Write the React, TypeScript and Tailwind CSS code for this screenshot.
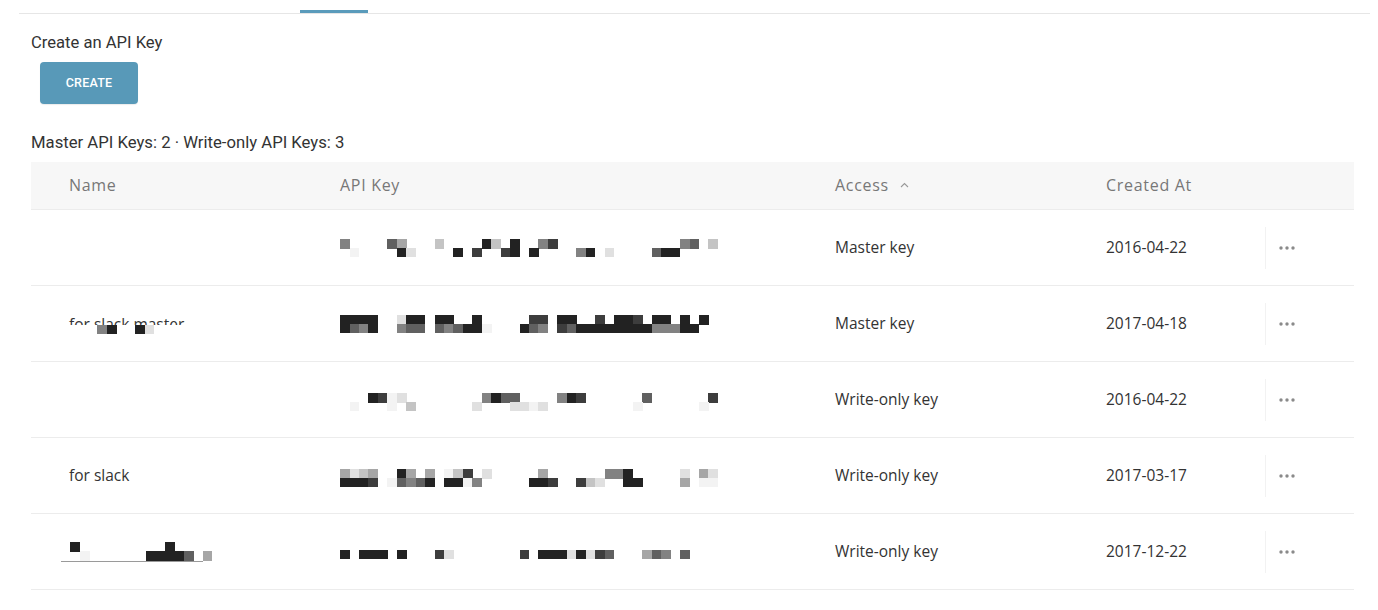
const SHADES: Record<string, string> = {
  a: '#222222',
  b: '#3d3d3d',
  c: '#606060',
  d: '#828282',
  e: '#a6a6a6',
  f: '#c4c4c4',
  g: '#e0e0e0',
  h: '#f3f3f3',
}

const CELL = 9.45

// pixelated redaction, one string per line of blocks
function Mosaic({ lines, className = '' }: { lines: string[]; className?: string }) {
  const cols = Math.max(...lines.map((l) => l.length))
  return (
    <svg
      width={cols * CELL}
      height={lines.length * CELL}
      viewBox={`0 0 ${cols * CELL} ${lines.length * CELL}`}
      className={className}
      shapeRendering="crispEdges"
    >
      {lines.map((line, r) =>
        line.split('').map((ch, c) =>
          ch === ' ' ? null : (
            <rect key={`${r}-${c}`} x={c * CELL} y={r * CELL} width={CELL + 0.3} height={CELL + 0.3} fill={SHADES[ch]} />
          ),
        ),
      )}
    </svg>
  )
}

function Dots() {
  return (
    <svg width="16" height="4" viewBox="0 0 16 4">
      <circle cx="2" cy="2" r="1.7" fill="#8a8a8a" />
      <circle cx="8" cy="2" r="1.7" fill="#8a8a8a" />
      <circle cx="14" cy="2" r="1.7" fill="#8a8a8a" />
    </svg>
  )
}

type Row = {
  name: React.ReactNode
  key: string[]
  keyClass?: string
  access: string
  created: string
}

const rows: Row[] = [
  {
    name: null,
    key: ['d    ce   f    af a  db             dc f', ' h    ag    a b  ba a    da g    caa    '],
    access: 'Master key',
    created: '2016-04-22',
  },
  {
    name: (
      <div className="relative h-[20px] w-[160px]">
        <div className="whitespace-nowrap leading-[20px]">for slack master</div>
        <div className="absolute inset-x-0 top-[11px] h-[12px] bg-white">
          <Mosaic lines={['   da  ag']} />
        </div>
      </div>
    ),
    key: ['aaaa  gaa aa  a     bb aa  b aab aa a a ', 'acda  dcc cdcaah   acd bcaaaaaaaadddaa  '],
    access: 'Master key',
    created: '2017-04-18',
  },
  {
    name: null,
    key: ['   abhg        dacc    dab      c      b', ' h   h f      g   gghg         h      h '],
    keyClass: 'mt-[4px]',
    access: 'Write-only key',
    created: '2016-04-22',
  },
  {
    name: 'for slack',
    key: ['egfe  ae e hfb g     e      dda     g eg', 'aaab hcdca aahd     aab  bfg  aa    e hh'],
    keyClass: 'mt-[4px]',
    access: 'Write-only key',
    created: '2017-03-17',
  },
  {
    name: (
      <div className="relative ml-[-8px] h-[20px] w-[150px]">
        <Mosaic lines={[' a         a     ', '  h      aaaac e']} className="absolute left-0 top-0" />
        <div className="absolute left-0 top-[19px] h-px w-[142px] bg-[#9a9a9a]" />
      </div>
    ),
    key: ['a aaa a   bg       b aaagagbc   ecd c   '],
    keyClass: 'mt-[5px]',
    access: 'Write-only key',
    created: '2017-12-22',
  },
]

const grid = 'grid grid-cols-[271px_495px_271px_197px_1fr]'

export default function App() {
  return (
    <div className="min-h-[610px] bg-white font-['Roboto',sans-serif] text-[#333]">
      <div className="ml-[19px] mr-[8px] flex h-[14px] items-end border-b border-[#e6e6e6]">
        <div className="ml-[281px] h-[3px] w-[68px] bg-[#5a9bbb]" />
      </div>

      <div className="px-[31px] pr-[24px]">
        <div className="mt-[19px] text-[16.6px] leading-[20px] text-[#333]">Create an API Key</div>
        <button className="ml-[9px] mt-[9px] flex h-[42px] w-[98px] items-center justify-center rounded-[4px] bg-[#5899b8] text-[12.5px] font-medium tracking-[0.2px] text-white shadow-[0_1px_1px_rgba(0,0,0,0.08)]">
          CREATE
        </button>
        <div className="mt-[29px] text-[16.7px] leading-[20px] text-[#333]">
          Master API Keys: 2 · Write-only API Keys: 3
        </div>

        <div className="mt-[9px] font-['Open_Sans',sans-serif] text-[15.5px]">
          <div className={`${grid} h-[48px] items-center border-b border-[#ececec] bg-[#f7f7f7] pb-px text-[16px] tracking-[0.7px] text-[#777]`}>
            <div className="pl-[38px]">Name</div>
            <div className="pl-[38px]">API Key</div>
            <div className="flex items-center pl-[38px]">
              Access
              <svg width="9" height="6" viewBox="0 0 9 6" className="ml-[11px]">
                <path d="M1 5 L4.5 1.5 L8 5" fill="none" stroke="#999" strokeWidth="1.1" />
              </svg>
            </div>
            <div className="pl-[38px]">Created At</div>
            <div />
          </div>

          {rows.map((row, i) => (
            <div key={i} className={`${grid} h-[76px] items-center border-b border-[#ececec] pt-px text-[#333]`}>
              <div className="pl-[38px]">{row.name}</div>
              <div className="flex pl-[38px]">
                <Mosaic lines={row.key} className={row.keyClass ?? ''} />
              </div>
              <div className="pl-[38px]">{row.access}</div>
              <div className="pl-[38px]">{row.created}</div>
              <div className="flex h-[42px] items-center border-l border-[#f2f2f2] pl-[13px]">
                <Dots />
              </div>
            </div>
          ))}
        </div>
      </div>
    </div>
  )
}
